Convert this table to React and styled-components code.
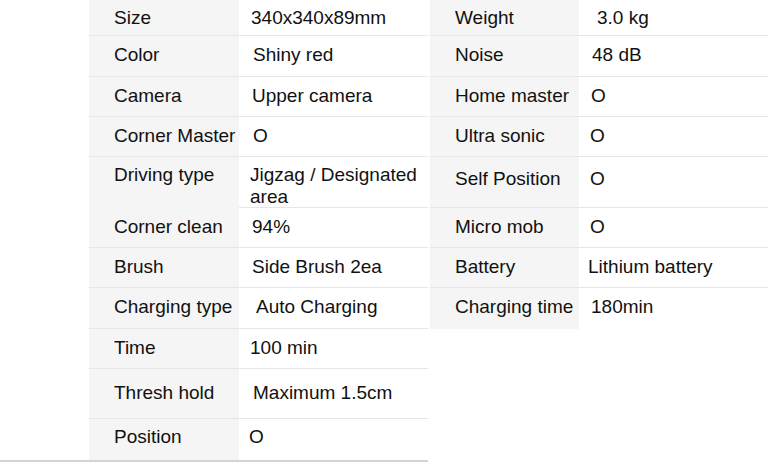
import styled, { createGlobalStyle } from "styled-components";

const GlobalStyle = createGlobalStyle`
  html, body {
    margin: 0;
    padding: 0;
    background: #ffffff;
  }
  body {
    font-family: "Liberation Sans", Arial, sans-serif;
    color: #111111;
  }
`;

// lift = how many px the text sits above the middle of its row
const leftSpecs = [
  { label: "Size", value: "340x340x89mm", h: 36, indent: 12, lift: 0 },
  { label: "Color", value: "Shiny red", h: 41, indent: 14, lift: 1 },
  { label: "Camera", value: "Upper camera", h: 40, indent: 13, lift: 1 },
  { label: "Corner Master", value: "O", h: 40, indent: 14, lift: 1 },
  { label: "Driving type", value: "Jigzag / Designated area", h: 51, indent: 11, top: true },
  { label: "Corner clean", value: "94%", h: 40, indent: 13, lift: 1 },
  { label: "Brush", value: "Side Brush 2ea", h: 40, indent: 13, lift: 1 },
  { label: "Charging type", value: "Auto Charging", h: 41, indent: 17, lift: 1 },
  { label: "Time", value: "100 min", h: 40, indent: 11, lift: 1 },
  { label: "Thresh hold", value: "Maximum 1.5cm", h: 50, indent: 14, lift: 1 },
  { label: "Position", value: "O", h: 41, indent: 10, lift: 3 },
];

const rightSpecs = [
  { label: "Weight", value: "3.0 kg", h: 36, indent: 18, lift: 0 },
  { label: "Noise", value: "48 dB", h: 41, indent: 13, lift: 1 },
  { label: "Home master", value: "O", h: 40, indent: 12, lift: 1 },
  { label: "Ultra sonic", value: "O", h: 40, indent: 11, lift: 1 },
  { label: "Self Position", value: "O", h: 51, indent: 11, lift: 3 },
  { label: "Micro mob", value: "O", h: 40, indent: 11, lift: 1 },
  { label: "Battery", value: "Lithium battery", h: 40, indent: 9, lift: 1 },
  { label: "Charging time", value: "180min", h: 41, indent: 12, lift: 2 },
];

const Page = styled.div`
  display: flex;
  gap: 2px;
  width: 768px;
  height: 463px;
  overflow: hidden;
`;

const LeftColumn = styled.div`
  width: 428px;
  flex: none;
  padding-left: 89px;
  box-sizing: border-box;
  border-bottom: 2px solid #d4d4d4;
  align-self: flex-start;
`;

const RightColumn = styled.div`
  flex: 1;
  align-self: flex-start;
`;

const SpecTable = styled.div`
  display: flex;
  flex-direction: column;
`;

const Row = styled.div`
  display: grid;
  grid-template-columns: ${(p) => p.$labelWidth}px 1fr;
  height: ${(p) => p.$h}px;
  box-sizing: border-box;
  border-bottom: 1px solid #e6e6e6;
  &:last-child {
    border-bottom: none;
  }
`;

const Cell = styled.div`
  display: flex;
  align-items: ${(p) => (p.$top ? "flex-start" : "center")};
  padding-top: ${(p) => (p.$top ? "7px" : "0")};
  padding-bottom: ${(p) => (p.$top ? 0 : p.$lift * 2)}px;
  box-sizing: border-box;
  font-size: 19px;
  line-height: 22px;
`;

const Label = styled(Cell)`
  background: #f5f5f5;
  padding-left: 25px;
  white-space: nowrap;
`;

const Value = styled(Cell)`
  padding-left: ${(p) => p.$indent}px;
  padding-right: 8px;
`;

const Specs = ({ rows, labelWidth }) => (
  <SpecTable>
    {rows.map((r) => (
      <Row key={r.label} $h={r.h} $labelWidth={labelWidth}>
        <Label $top={r.top} $lift={r.lift}>{r.label}</Label>
        <Value $indent={r.indent} $top={r.top} $lift={r.lift}>
          {r.value}
        </Value>
      </Row>
    ))}
  </SpecTable>
);

export default function App() {
  return (
    <>
      <GlobalStyle />
      <Page>
        <LeftColumn>
          <Specs rows={leftSpecs} labelWidth={150} />
        </LeftColumn>
        <RightColumn>
          <Specs rows={rightSpecs} labelWidth={149} />
        </RightColumn>
      </Page>
    </>
  );
}
